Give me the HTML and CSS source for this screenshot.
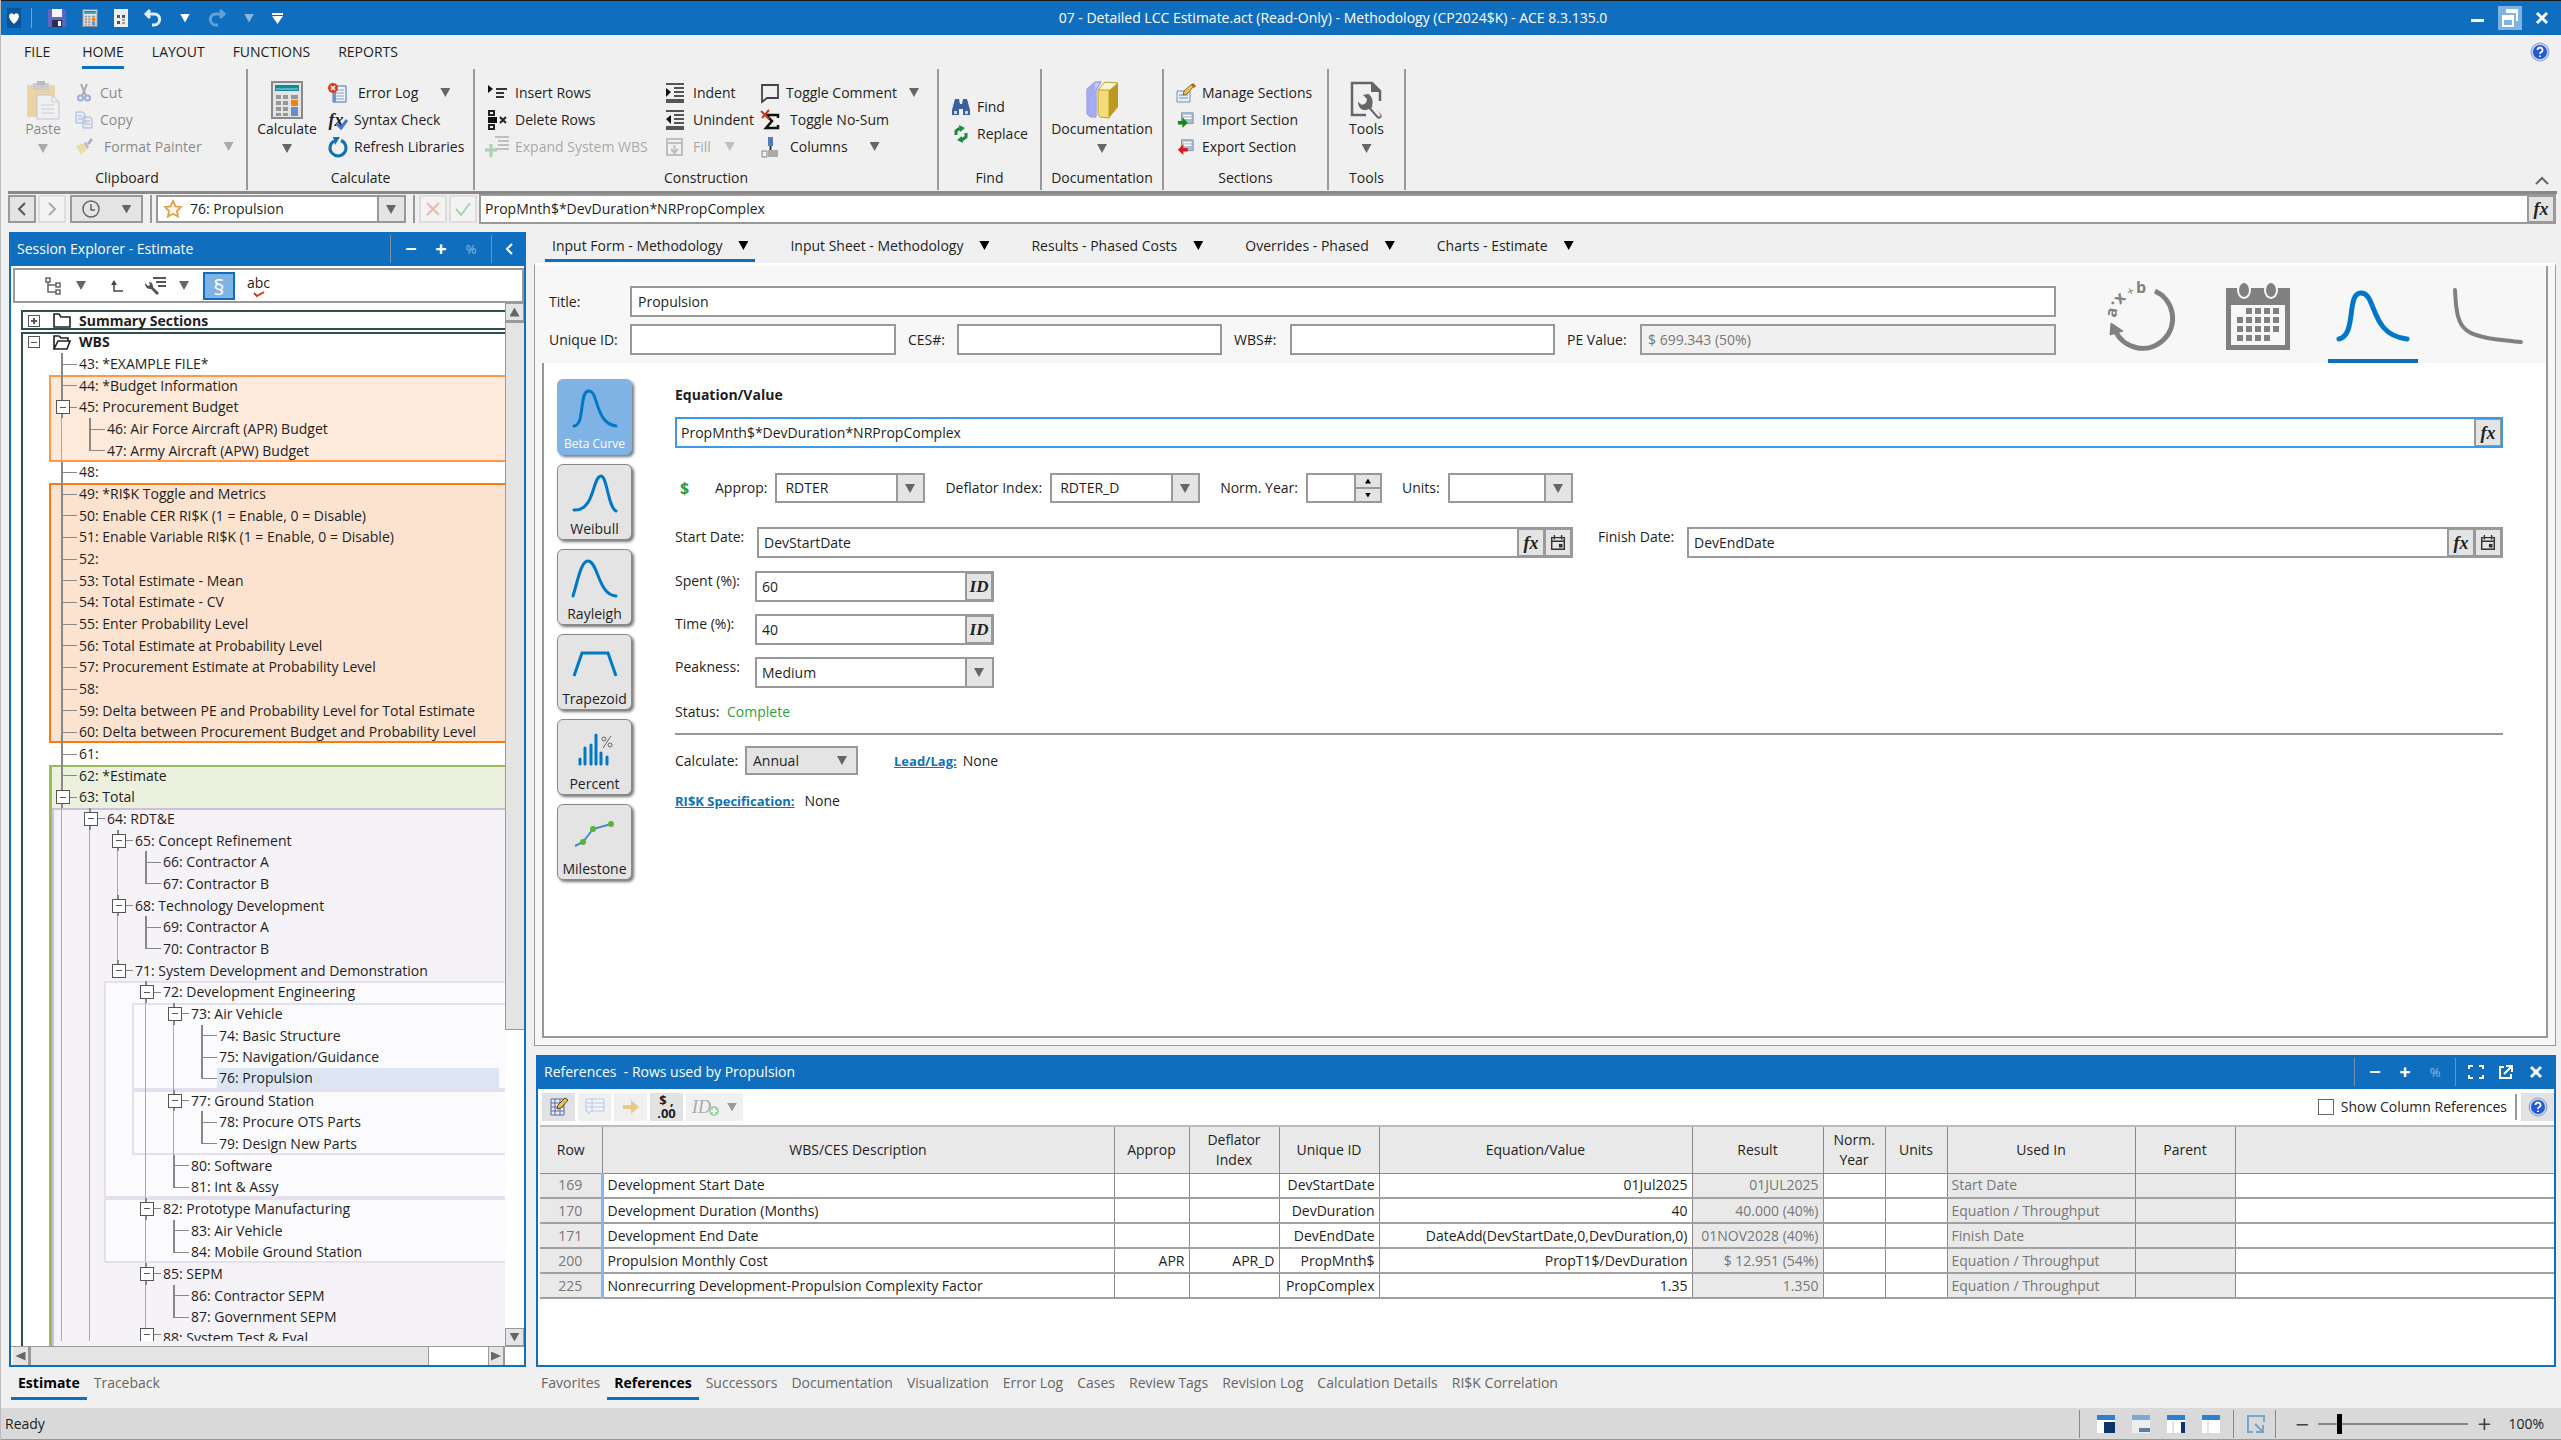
FILE: index.html
```html
<!DOCTYPE html>
<html lang="en">
<head>
<meta charset="utf-8">
<title>07 - Detailed LCC Estimate.act - ACE</title>
<link rel="stylesheet" href="styles.css">
</head>
<body>
<svg class="defs" aria-hidden="true">
  <symbol id="calc" viewBox="0 0 32 38"><rect x="1" y="1" width="30" height="36" fill="#e3e3e3" stroke="#8a8a8a" stroke-width="2"/><rect x="4" y="4" width="24" height="6" fill="#1b8498"/><rect x="5" y="7" width="22" height="2" fill="#52b6c6"/><g fill="#979797"><path d="M5 14h5v4H5zM12 14h5v4h-5zM5 20h5v4H5zM12 20h5v4h-5zM5 26h5v4H5zM12 26h5v4h-5zM5 32h5v3H5zM12 32h5v3h-5zM20 14h7v4h-7z"/></g><rect x="20" y="19" width="7" height="6" fill="#f77f0d"/><rect x="20" y="26" width="7" height="9" fill="#6b8cc4"/></symbol>
  <symbol id="help" viewBox="0 0 20 20"><circle cx="10" cy="10" r="9" fill="#c3d0e8" stroke="#8fa3cc"/><circle cx="10" cy="10" r="7" fill="#2358d6"/><path d="M7.500 8a2.500 2.500 0 1 1 3.500 2.300c-.8.400-1 .8-1 1.700M10 13.500v1.500" fill="none" stroke="#fff" stroke-width="1.800"/></symbol>
  <symbol id="beta" viewBox="0 0 48 42"><path d="M3 38C14 37 8 5 17 3c11-2 6 32 28 35" fill="none" stroke="#0078c8" stroke-width="3" stroke-linecap="round"/></symbol>
  <symbol id="cal" viewBox="0 0 20 20"><path d="M3 4h14v13H3zM3 8h14M6 1v5M14 1v5" fill="none" stroke="#333" stroke-width="1.600"/><rect x="11" y="11" width="4" height="4" fill="#333"/></symbol>
  <symbol id="pencilpad" viewBox="0 0 20 20"><path d="M1 8h13v11H1z" fill="#e8eef8" stroke="#7890b0"/><path d="M3 12h9M3 15h9" stroke="#7890b0"/><path d="M7 12l1-4 8-7 2 2-7 8z" fill="#e8c35a" stroke="#8a6a30"/><path d="M15 2l2-2 3 3-2 2z" fill="#c4532c"/></symbol>
  <symbol id="section" viewBox="0 0 20 20"><path d="M5 2h13v12H5z" fill="#a9bcd3" stroke="#8095b0"/><path d="M7 5h9M7 8h9" stroke="#fff" stroke-width="1.500"/><path d="M1 11h5V7l6 6-6 6v-4H1z" fill="currentColor"/></symbol>
  <symbol id="lines" viewBox="0 0 20 20"><path d="M1 1h18M9 5h10M9 9h10M9 13h10M1 17h18M1 19h18" stroke="#222" stroke-width="1.500"/></symbol>
</svg>

<header class="titlebar">
  <div class="quick">
    <button class="heart" aria-label="App"><svg width="10" height="11" viewBox="0 0 10 11"><path d="M5 11C2 8 0 6 0 3c0-3 4-4 5-1 1-3 5-2 5 1 0 3-2 5-5 8z" fill="#fff"/></svg></button><i class="qsep"></i>
    <button aria-label="Save"><svg width="18" height="18" viewBox="0 0 18 18"><path d="M0 0h16l2 2v16H0z" fill="#6065c0"/><path d="M4 0h10v8H4z" fill="#f4f4fc"/><path d="M4 11h10v7H4z" fill="#2a2c58"/><path d="M10 12h3v5h-3z" fill="#fff"/></svg></button>
    <button aria-label="Calculate"><svg width="16" height="18"><use href="#calc"/></svg></button>
    <button aria-label="Report"><svg width="14" height="18" viewBox="0 0 14 18"><path d="M0 0h14v18H0z" fill="#eee"/><path d="M3 6h3v3H3zM8 6h3v3H8zM3 12h3v3H3z" fill="#555"/><path d="M8 11h3M8 14h3" stroke="#555"/></svg></button>
    <button aria-label="Undo"><svg width="18" height="18" viewBox="0 0 18 18"><path d="M6 1L2 5l4 4M2 5h8c8 0 7 11 0 11H8" fill="none" stroke="#e4eefa" stroke-width="3"/></svg></button>
    <i class="caret white"></i>
    <button class="off" aria-label="Redo"><svg width="18" height="18" viewBox="0 0 18 18"><path d="M12 1l4 4-4 4M16 5H8C0 5 1 16 8 16h2" fill="none" stroke="#b8d4f0" stroke-width="3"/></svg></button>
    <i class="caret white off"></i>
    <button aria-label="Customize"><svg width="11" height="11" viewBox="0 0 11 11"><path d="M0 0h11v2H0zM0 3h11l-5.500 8z" fill="#fff"/></svg></button>
  </div>
  <h1>07 - Detailed LCC Estimate.act (Read-Only) - Methodology (CP2024$K) - ACE 8.3.135.0</h1>
  <div class="winbtns">
    <button aria-label="Minimize"><svg width="14" height="14"><path d="M0 8h13v3H0z" fill="#fff"/></svg></button>
    <button class="restore" aria-label="Restore"><svg width="24" height="24" viewBox="0 0 24 24"><path d="M8 3h12v12h-2V7H8zM4 9h12v12H4zM6 14v5h8v-5z" fill="#fff" fill-rule="evenodd"/></svg></button>
    <button aria-label="Close"><svg width="14" height="14" viewBox="0 0 14 14"><path d="M2 2l10 10M12 2L2 12" stroke="#fff" stroke-width="3"/></svg></button>
  </div>
</header>

<nav class="menu">
  <a href="#">FILE</a><a href="#" class="on">HOME</a><a href="#">LAYOUT</a><a href="#">FUNCTIONS</a><a href="#">REPORTS</a>
  <button class="helpbtn" aria-label="Help"><svg width="20" height="20"><use href="#help"/></svg></button>
</nav>

<section class="ribbon">
  <div class="grp g-clip"><div class="gbody">
    <button class="big dim"><svg width="34" height="38" viewBox="0 0 34 38"><path d="M1 4h28v32H1z" fill="#e8b861"/><path d="M7 2h16v7H7z" fill="#aaa"/><path d="M11 0h8v4h-8z" fill="#888"/><path d="M11 14h15l7 7v17H11z" fill="#eef0f5" stroke="#99a"/><path d="M26 14v7h7M15 24h13M15 28h13M15 32h13" fill="none" stroke="#aab"/></svg>Paste<i class="caret"></i></button>
    <div class="col">
      <button class="dim"><span class="ic"><svg width="14" height="18" viewBox="0 0 14 18"><path d="M4 0l5 12M10 0L5 12" stroke="#667" stroke-width="2"/><circle cx="3.500" cy="14" r="2.500" fill="none" stroke="#4a6fb8" stroke-width="2"/><circle cx="10.500" cy="14" r="2.500" fill="none" stroke="#4a6fb8" stroke-width="2"/></svg></span>Cut</button>
      <button class="dim"><span class="ic"><svg width="18" height="18" viewBox="0 0 18 18"><path d="M1 1h7l2 2v9H1zM8 6h7l2 2v9H8z" fill="#dce6f6" stroke="#5b7fc0"/><path d="M3 5h4M3 8h4M10 10h5M10 13h5" stroke="#5b7fc0"/></svg></span>Copy</button>
      <button class="dim wide"><span class="ic"><svg width="18" height="18" viewBox="0 0 18 18"><path d="M1 8l8-3 3 6-6 6z" fill="#e6c95c"/><path d="M9 5l3 6 2-2-3-5z" fill="#888"/><path d="M12 5l4-5 2 2-4 5z" fill="#6670b0"/></svg></span>Format Painter<i class="caret"></i></button>
    </div></div><h2>Clipboard</h2></div>
  <div class="grp g-calc"><div class="gbody">
    <button class="big"><svg width="32" height="38"><use href="#calc"/></svg>Calculate<i class="caret"></i></button>
    <div class="col">
      <button class="wide"><span class="ic"><svg width="20" height="20" viewBox="0 0 20 20"><path d="M5 3h13v16H5z" fill="#f2f6fc" stroke="#456ba5"/><path d="M8 7h8M8 10h8M8 13h8M8 16h8" stroke="#7ba0d4"/><path d="M5 3h3v16H5z" fill="#6f96cc"/><circle cx="5" cy="5" r="5" fill="#d8401e"/><path d="M3 3l4 4M7 3L3 7" stroke="#fff" stroke-width="1.500"/></svg></span>Error Log<i class="caret"></i></button>
      <button><span class="ic"><span class="fx">fx</span><svg class="tick" width="12" height="10" viewBox="0 0 12 10"><path d="M1 5l4 4 6-8" fill="none" stroke="#4b74d0" stroke-width="3"/></svg></span>Syntax Check</button>
      <button><span class="ic"><svg width="20" height="20" viewBox="0 0 20 20"><path d="M13 3.500A8 8 0 1 1 6 4" fill="none" stroke="#1170ae" stroke-width="3"/><path d="M5 0h7l-5 8z" fill="#1170ae"/></svg></span>Refresh Libraries</button>
    </div></div><h2>Calculate</h2></div>
  <div class="grp g-cons"><div class="gbody">
    <div class="col c1">
      <button><span class="ic"><svg width="20" height="16" viewBox="0 0 20 16"><path d="M1 0l5 4-5 4z" fill="#111"/><path d="M9 4h11M9 8h8M9 12h8" stroke="#333" stroke-width="2"/></svg></span>Insert Rows</button>
      <button><span class="ic"><svg width="20" height="20" viewBox="0 0 20 20"><path d="M2 1h5v4H2zM2 15h5v4H2z" fill="none" stroke="#222" stroke-width="2"/><path d="M1 7h9v6H1z" fill="#111"/><path d="M13 7l6 6M19 7l-6 6" stroke="#222" stroke-width="2"/></svg></span>Delete Rows</button>
      <button class="faint"><span class="ic"><svg width="24" height="22" viewBox="0 0 24 22"><path d="M10 1h14M13 5h11M13 9h11M10 13h14" stroke="#666" stroke-width="2"/><path d="M6 8v13M0 14h12" stroke="#2f9a3c" stroke-width="3"/></svg></span>Expand System WBS</button>
    </div>
    <div class="col c2">
      <button><span class="ic"><svg width="20" height="20"><use href="#lines"/><path d="M1 5l5 4-5 5z" fill="#111"/></svg></span>Indent</button>
      <button><span class="ic"><svg width="20" height="20"><use href="#lines"/><path d="M6 5L1 9l5 5z" fill="#111"/></svg></span>Unindent</button>
      <button class="faint"><span class="ic"><svg width="18" height="18" viewBox="0 0 18 18"><path d="M1 1h15v16H1zM1 5h15M8.500 7v8M5 11l3.500 4 3.500-4" fill="none" stroke="#666" stroke-width="2"/></svg></span>Fill<i class="caret"></i></button>
    </div>
    <div class="col c3">
      <button><span class="ic"><svg width="20" height="20" viewBox="0 0 20 20"><path d="M2 2h16v13H7l-5 4z" fill="none" stroke="#444" stroke-width="1.800"/></svg></span>Toggle Comment<i class="caret"></i></button>
      <button class="wide"><span class="ic"><svg width="20" height="20" viewBox="0 0 20 20"><path d="M18 8V5H6l6 6-6 7h12v-3" fill="none" stroke="#111" stroke-width="2.500"/><path d="M1 1l8 8M9 0L2 8" stroke="#d03a18" stroke-width="2"/></svg></span>Toggle No-Sum</button>
      <button class="wide"><span class="ic"><svg width="18" height="20" viewBox="0 0 18 20"><path d="M7 0h5v9H7z" fill="#5577c0"/><path d="M9.500 9v4" stroke="#333" stroke-width="2"/><path d="M1 14h5v6H1z" fill="none" stroke="#888"/><path d="M7 13h10v7H7z" fill="#aaa"/></svg></span>Columns<i class="caret"></i></button>
    </div></div><h2>Construction</h2></div>
  <div class="grp g-find"><div class="gbody"><div class="col">
      <button><span class="ic"><svg width="20" height="18" viewBox="0 0 20 18"><path d="M4 1h4l1 5h2l1-5h4l3 11v5h-7v-6H8v6H1v-5z" fill="#3d5f9e"/><path d="M3 13h3v3H3zM14 13h3v3h-3z" fill="#c5d6f2"/></svg></span>Find</button>
      <button><span class="ic"><svg width="16" height="18" viewBox="0 0 16 18"><path d="M3 10V6l4-3M13 8v4l-4 3" fill="none" stroke="#1c8a3a" stroke-width="3"/><path d="M6 0l6 3-5 4zM10 18l-6-3 5-4z" fill="#1c8a3a"/></svg></span>Replace</button>
  </div></div><h2>Find</h2></div>
  <div class="grp g-doc"><div class="gbody">
    <button class="big"><svg width="34" height="38" viewBox="0 0 34 38"><path d="M2 8l8-7h6l-5 8v27H5l-3-3z" fill="#c9cffa" stroke="#7b82d8"/><path d="M2 8l8-7v28l1 7H5l-3-3z" fill="#a4abf0"/><path d="M13 9l7-8 13 1-9 8z" fill="#fbf4d0" stroke="#b89a30"/><path d="M13 9h11v28l-9-1-2-3z" fill="#f4dd78" stroke="#c2a12b"/><path d="M24 10l9-8v24l-9 11z" fill="#bd9921"/></svg>Documentation<i class="caret"></i></button>
  </div><h2>Documentation</h2></div>
  <div class="grp g-sec"><div class="gbody"><div class="col">
      <button><span class="ic"><svg width="20" height="20"><use href="#pencilpad"/></svg></span>Manage Sections</button>
      <button><span class="ic green"><svg width="18" height="18"><use href="#section"/></svg></span>Import Section</button>
      <button><span class="ic red"><svg width="18" height="18" viewBox="0 0 20 20"><path d="M5 2h13v12H5z" fill="#a9bcd3" stroke="#8095b0"/><path d="M7 5h9M7 8h9" stroke="#fff" stroke-width="1.500"/><path d="M12 11H7V7l-6 6 6 6v-4h5z" fill="currentColor"/></svg></span>Export Section</button>
  </div></div><h2>Sections</h2></div>
  <div class="grp g-tool"><div class="gbody">
    <button class="big"><svg width="34" height="38" viewBox="0 0 34 38"><path d="M16 34H2V2h20l8 8v10" fill="none" stroke="#666" stroke-width="2.500"/><path d="M21 2v9h9z" fill="#666"/><path d="M18 13l-5 1 4 4-1 4-4 2-4-3c0 7 6 10 11 7l8 9c3 2 6-1 4-4l-9-8c2-6-1-11-4-12z" fill="#666"/><path d="M23 27l6 7" stroke="#f0f0f0" stroke-width="3" stroke-linecap="round"/></svg>Tools<i class="caret"></i></button>
  </div><h2>Tools</h2></div>
  <button class="collapse" aria-label="Collapse ribbon"><svg width="14" height="9" viewBox="0 0 14 9"><path d="M1 8l6-6 6 6" fill="none" stroke="#666" stroke-width="2"/></svg></button>
</section>

<section class="address">
  <button class="nav" aria-label="Back"><svg width="10" height="14" viewBox="0 0 10 14"><path d="M8 1L2 7l6 6" fill="none" stroke="#555" stroke-width="2"/></svg></button>
  <button class="nav ghost" aria-label="Forward"><svg width="10" height="14" viewBox="0 0 10 14"><path d="M2 1l6 6-6 6" fill="none" stroke="#aaa" stroke-width="2"/></svg></button>
  <button class="nav clock" aria-label="History"><svg width="18" height="18" viewBox="0 0 18 18"><circle cx="9" cy="9" r="8" fill="none" stroke="#666" stroke-width="1.500"/><path d="M9 4v6h4" fill="none" stroke="#666" stroke-width="1.500"/></svg><i class="caret"></i></button>
  <i class="asep"></i>
  <div class="star"><svg width="20" height="20" viewBox="0 0 20 20"><path d="M10 2l2.500 5.300 5.500.700-4 4 1 5.500-5-2.800L5 17.500 6 12 2 8l5.500-.7z" fill="#fff8ea" stroke="#e0a048" stroke-width="1.800"/></svg>
    <select aria-label="Row"><option>76: Propulsion</option></select></div>
  <i class="asep"></i>
  <button class="nav ghost" aria-label="Cancel"><svg width="14" height="14" viewBox="0 0 14 14"><path d="M1 1l12 12M13 1L1 13" stroke="#eab8ac" stroke-width="2"/></svg></button>
  <button class="nav ghost" aria-label="Accept"><svg width="16" height="14" viewBox="0 0 16 14"><path d="M1 7l5 6L15 1" fill="none" stroke="#a5d6a5" stroke-width="2"/></svg></button>
  <div class="field formula"><input aria-label="Formula" value="PropMnth$*DevDuration*NRPropComplex"><button class="fx">fx</button></div>
</section>

<main class="work">
  <aside class="left">
    <section class="explorer">
      <header class="phead"><h2>Session Explorer - Estimate</h2>
        <i class="psep"></i><button>−</button><button>+</button><button class="off pct">%</button><i class="psep"></i>
        <button aria-label="Collapse"><svg width="8" height="12" viewBox="0 0 8 12"><path d="M7 1L2 6l5 5" fill="none" stroke="#fff" stroke-width="2"/></svg></button></header>
      <div class="etools">
        <button aria-label="Tree"><svg width="16" height="18" viewBox="0 0 16 18"><path d="M1 1h4v4H1zM11 6h4v4h-4zM11 13h4v4h-4zM3 5v10h8M3 8h8" fill="none" stroke="#666" stroke-width="1.500"/></svg></button><i class="caret"></i>
        <button aria-label="Up"><svg width="12" height="12" viewBox="0 0 12 12"><path d="M3 3v8h9" fill="none" stroke="#444" stroke-width="1.500"/><path d="M0 5l3-5 3 5z" fill="#444"/></svg></button>
        <button aria-label="Settings"><svg width="22" height="20" viewBox="0 0 22 20"><path d="M8 2h13M11 6h10M13 10h8" stroke="#555" stroke-width="2"/><path d="M0 7c0 5 3 6 6 6l6 6 2-2-6-6c0-4-2-5-4-5l1 3-2 1z" fill="#555"/></svg></button><i class="caret near"></i>
        <button class="para">§</button>
        <button class="abc">abc<svg width="12" height="6" viewBox="0 0 12 6"><path d="M1 2l3 3 7-4" fill="none" stroke="#c8401e" stroke-width="2"/></svg></button>
      </div>
      <div class="ebody">
        <div class="tree">
          <div class="layer">
            <div class="bx dark b1"></div><div class="bx dark b2"></div><div class="bx or1"></div><div class="bx or2"></div><div class="bx gr"></div><div class="bx pu"></div><div class="bx lt p72"></div><div class="bx lt p73"></div><div class="bx lt p77"></div><div class="bx lt p82"></div>
          </div>
          <div class="layer">
          <div class="r top"><b class="pm plus"></b><svg width="18" height="15" viewBox="0 0 18 15"><path d="M1 14V1h5l2 3h9v10z" fill="#fff" stroke="#222" stroke-width="1.600"/></svg>Summary Sections</div>
          <div class="r top"><b class="pm"></b><svg width="18" height="15" viewBox="0 0 18 15"><path d="M1 14V1h5l2 2h7v3M1 14l4-8h12l-3 8z" fill="#fff" stroke="#222" stroke-width="1.600"/></svg>WBS</div>
          <div class="r"><i class="t"></i>43: *EXAMPLE FILE*</div>
          <div class="r"><i class="t"></i>44: *Budget Information</div>
          <div class="r"><i class="m"></i>45: Procurement Budget</div>
          <div class="r"><i class="v"></i><i class="t"></i>46: Air Force Aircraft (APR) Budget</div>
          <div class="r"><i class="v"></i><i class="e"></i>47: Army Aircraft (APW) Budget</div>
          <div class="r"><i class="t"></i>48:</div>
          <div class="r"><i class="t"></i>49: *RI$K Toggle and Metrics</div>
          <div class="r"><i class="t"></i>50: Enable CER RI$K (1 = Enable, 0 = Disable)</div>
          <div class="r"><i class="t"></i>51: Enable Variable RI$K (1 = Enable, 0 = Disable)</div>
          <div class="r"><i class="t"></i>52:</div>
          <div class="r"><i class="t"></i>53: Total Estimate - Mean</div>
          <div class="r"><i class="t"></i>54: Total Estimate - CV</div>
          <div class="r"><i class="t"></i>55: Enter Probability Level</div>
          <div class="r"><i class="t"></i>56: Total Estimate at Probability Level</div>
          <div class="r"><i class="t"></i>57: Procurement Estimate at Probability Level</div>
          <div class="r"><i class="t"></i>58:</div>
          <div class="r"><i class="t"></i>59: Delta between PE and Probability Level for Total Estimate</div>
          <div class="r"><i class="t"></i>60: Delta between Procurement Budget and Probability Level</div>
          <div class="r"><i class="t"></i>61:</div>
          <div class="r"><i class="t"></i>62: *Estimate</div>
          <div class="r"><i class="m"></i>63: Total</div>
          <div class="r"><i class="v"></i><i class="m"></i>64: RDT&amp;E</div>
          <div class="r"><i class="v"></i><i class="v"></i><i class="m"></i>65: Concept Refinement</div>
          <div class="r"><i class="v"></i><i class="v"></i><i class="v"></i><i class="t"></i>66: Contractor A</div>
          <div class="r"><i class="v"></i><i class="v"></i><i class="v"></i><i class="e"></i>67: Contractor B</div>
          <div class="r"><i class="v"></i><i class="v"></i><i class="m"></i>68: Technology Development</div>
          <div class="r"><i class="v"></i><i class="v"></i><i class="v"></i><i class="t"></i>69: Contractor A</div>
          <div class="r"><i class="v"></i><i class="v"></i><i class="v"></i><i class="e"></i>70: Contractor B</div>
          <div class="r"><i class="v"></i><i class="v"></i><i class="m z"></i>71: System Development and Demonstration</div>
          <div class="r"><i class="v"></i><i class="v"></i><i></i><i class="m"></i>72: Development Engineering</div>
          <div class="r"><i class="v"></i><i class="v"></i><i></i><i class="v"></i><i class="m"></i>73: Air Vehicle</div>
          <div class="r"><i class="v"></i><i class="v"></i><i></i><i class="v"></i><i class="v"></i><i class="t"></i>74: Basic Structure</div>
          <div class="r"><i class="v"></i><i class="v"></i><i></i><i class="v"></i><i class="v"></i><i class="t"></i>75: Navigation/Guidance</div>
          <div class="r"><i class="v"></i><i class="v"></i><i></i><i class="v"></i><i class="v"></i><i class="e"></i><span class="sel">76: Propulsion</span></div>
          <div class="r"><i class="v"></i><i class="v"></i><i></i><i class="v"></i><i class="m"></i>77: Ground Station</div>
          <div class="r"><i class="v"></i><i class="v"></i><i></i><i class="v"></i><i class="v"></i><i class="t"></i>78: Procure OTS Parts</div>
          <div class="r"><i class="v"></i><i class="v"></i><i></i><i class="v"></i><i class="v"></i><i class="e"></i>79: Design New Parts</div>
          <div class="r"><i class="v"></i><i class="v"></i><i></i><i class="v"></i><i class="t"></i>80: Software</div>
          <div class="r"><i class="v"></i><i class="v"></i><i></i><i class="v"></i><i class="e"></i>81: Int &amp; Assy</div>
          <div class="r"><i class="v"></i><i class="v"></i><i></i><i class="m"></i>82: Prototype Manufacturing</div>
          <div class="r"><i class="v"></i><i class="v"></i><i></i><i class="v"></i><i class="t"></i>83: Air Vehicle</div>
          <div class="r"><i class="v"></i><i class="v"></i><i></i><i class="v"></i><i class="e"></i>84: Mobile Ground Station</div>
          <div class="r"><i class="v"></i><i class="v"></i><i></i><i class="m"></i>85: SEPM</div>
          <div class="r"><i class="v"></i><i class="v"></i><i></i><i class="v"></i><i class="t"></i>86: Contractor SEPM</div>
          <div class="r"><i class="v"></i><i class="v"></i><i></i><i class="v"></i><i class="e"></i>87: Government SEPM</div>
          <div class="r cut"><i class="v"></i><i class="v"></i><i></i><i class="m"></i>88: System Test &amp; Eval</div>
          </div>
        </div>
        <div class="vbar"><button aria-label="Scroll up"><i class="caret up"></i></button><div class="thumb"></div><button aria-label="Scroll down"><i class="caret"></i></button></div>
      </div>
      <div class="hbar"><button aria-label="Scroll left"><i class="caret lf"></i></button><div class="thumb"></div><button aria-label="Scroll right"><i class="caret rt"></i></button><div class="corner"></div></div>
    </section>
    <nav class="btabs"><a href="#" class="on">Estimate</a><a href="#">Traceback</a></nav>
  </aside>

  <div class="right">
    <nav class="ftabs">
      <a href="#" class="on">Input Form - Methodology<i class="caret"></i></a><a href="#">Input Sheet - Methodology<i class="caret"></i></a><a href="#">Results - Phased Costs<i class="caret"></i></a><a href="#">Overrides - Phased<i class="caret"></i></a><a href="#">Charts - Estimate<i class="caret"></i></a>
    </nav>
    <section class="form">
      <div class="fhead">
        <div class="ident">
          <label for="ti">Title:</label><input id="ti" class="span" value="Propulsion">
          <label for="ui">Unique ID:</label><input id="ui">
          <label for="ces">CES#:</label><input id="ces">
          <label for="wbs">WBS#:</label><input id="wbs">
          <label for="pe">PE Value:</label><input id="pe" class="ro" value="$ 699.343 (50%)" readonly>
        </div>
        <div class="modes">
          <button aria-label="Equation"><svg width="72" height="74" viewBox="0 0 72 74"><path d="M48 12A30 30 0 1 1 8 51" fill="none" stroke="#808080" stroke-width="5"/><path d="M4 44l12 8-13 4z" fill="#808080" stroke="#808080"/><g fill="#808080" font-family="Open Sans, sans-serif" font-weight="700" font-size="16"><text transform="translate(9 39) rotate(-80)">a</text><text transform="translate(9 29) rotate(-55)">·</text><text transform="translate(13 26) rotate(-45)">x</text><text transform="translate(22 18) rotate(-25)" font-weight="400" font-size="13">+</text><text x="29" y="14">b</text></g></svg></button>
          <button aria-label="Calendar"><svg width="66" height="70" viewBox="0 0 66 70"><path d="M1 7h64v62H1zM6 24v40h54V24z" fill="#808080" fill-rule="evenodd"/><ellipse cx="19" cy="9" rx="6" ry="8" fill="#808080" stroke="#f7f7f7" stroke-width="2"/><ellipse cx="46" cy="9" rx="6" ry="8" fill="#808080" stroke="#f7f7f7" stroke-width="2"/><path d="M21 30h33" stroke="#808080" stroke-width="6" stroke-dasharray="6 3"/><path d="M12 39h42M12 48h42" stroke="#808080" stroke-width="6" stroke-dasharray="6 3"/><path d="M12 57h33" stroke="#808080" stroke-width="6" stroke-dasharray="6 3"/></svg></button>
          <button class="on" aria-label="Phasing"><svg width="74" height="54" viewBox="0 0 74 54"><path d="M3 50C21 46 10 4 25 4c16 0 8 42 46 46" fill="none" stroke="#0078c8" stroke-width="5" stroke-linecap="round"/></svg></button>
          <button aria-label="Learning"><svg width="72" height="58" viewBox="0 0 72 58"><path d="M3 3c2 45 8 46 66 52" fill="none" stroke="#808080" stroke-width="4" stroke-linecap="round"/></svg></button>
        </div>
      </div>
      <div class="fbody">
        <div class="curves">
          <button class="on"><svg width="48" height="42"><use href="#beta"/></svg>Beta Curve</button>
          <button><svg width="48" height="42" viewBox="0 0 48 42"><path d="M3 37C24 38 21 4 30 3c6 0 7 31 15 35" fill="none" stroke="#0078c8" stroke-width="3" stroke-linecap="round"/></svg>Weibull</button>
          <button><svg width="48" height="42" viewBox="0 0 48 42"><path d="M2 38C7 22 10 3 17 3c10 0 10 34 28 35" fill="none" stroke="#0078c8" stroke-width="3" stroke-linecap="round"/></svg>Rayleigh</button>
          <button><svg width="48" height="42" viewBox="0 0 48 42"><path d="M3 33L11 10h26l8 23" fill="none" stroke="#0078c8" stroke-width="3"/></svg>Trapezoid</button>
          <button><svg width="48" height="42" viewBox="0 0 48 42"><path d="M9 36v-5M14 36V20M20 36V17M25 36V7M30 36V25M36 36v-7" stroke="#0078c8" stroke-width="3" stroke-linecap="round"/><circle cx="33" cy="11" r="2" fill="none" stroke="#666"/><circle cx="39" cy="17" r="2" fill="none" stroke="#666"/><path d="M40 8l-8 12" stroke="#666"/></svg>Percent</button>
          <button><svg width="48" height="42" viewBox="0 0 48 42"><path d="M4 33l8-4 10-13 18-5" fill="none" stroke="#3b8cd2" stroke-width="2"/><g fill="#59b335"><circle cx="12" cy="29" r="3"/><circle cx="22" cy="16" r="3"/><circle cx="40" cy="11" r="3"/></g></svg>Milestone</button>
        </div>
        <div class="fields">
          <h3><label for="eq">Equation/Value</label></h3>
          <div class="field eq"><input id="eq" value="PropMnth$*DevDuration*NRPropComplex"><button class="fx">fx</button></div>
          <div class="line">
            <b class="dollar">$</b>
            <label for="ap">Approp:</label><select id="ap" class="w150"><option>RDTER</option></select>
            <label for="di">Deflator Index:</label><select id="di" class="w150"><option>RDTER_D</option></select>
            <label for="ny">Norm. Year:</label><span class="spin"><input id="ny"><span><button aria-label="Up"><i class="caret up"></i></button><button aria-label="Down"><i class="caret"></i></button></span></span>
            <label for="un">Units:</label><select id="un" class="w124"><option></option></select>
          </div>
          <div class="dates">
            <label for="sd">Start Date:</label><div class="field"><input id="sd" value="DevStartDate"><button class="fx">fx</button><button aria-label="Pick date"><svg width="18" height="18"><use href="#cal"/></svg></button></div>
            <label for="fd">Finish Date:</label><div class="field"><input id="fd" value="DevEndDate"><button class="fx">fx</button><button aria-label="Pick date"><svg width="18" height="18"><use href="#cal"/></svg></button></div>
          </div>
          <div class="stack">
            <label for="sp">Spent (%):</label><div class="field"><input id="sp" value="60"><button class="fx id">ID</button></div>
            <label for="tm">Time (%):</label><div class="field"><input id="tm" value="40"><button class="fx id">ID</button></div>
            <label for="pk">Peakness:</label><select id="pk" class="blk"><option>Medium</option></select>
          </div>
          <p class="status">Status: <span>Complete</span></p>
          <hr>
          <div class="calc"><label for="ca">Calculate:</label><select id="ca"><option>Annual</option></select><a href="#">Lead/Lag:</a><span>None</span></div>
          <div class="risk"><a href="#">RI$K Specification:</a><span>None</span></div>
        </div>
      </div>
    </section>

    <section class="refs">
      <header class="phead"><h2>References&nbsp; - Rows used by Propulsion</h2>
        <i class="psep"></i><button>−</button><button>+</button><button class="off pct">%</button><i class="psep"></i>
        <button aria-label="Maximize"><svg width="16" height="14" viewBox="0 0 16 14"><path d="M1 4V1h4M11 1h4v3M15 10v3h-4M5 13H1v-3" fill="none" stroke="#fff" stroke-width="2"/></svg></button>
        <button aria-label="Pop out"><svg width="14" height="14" viewBox="0 0 14 14"><path d="M5 2H1v11h11V9M5 9l7-7M7 1h6v6" fill="none" stroke="#fff" stroke-width="2"/></svg></button>
        <button aria-label="Close"><svg width="14" height="14" viewBox="0 0 14 14"><path d="M2 2l10 10M12 2L2 12" stroke="#fff" stroke-width="3"/></svg></button></header>
      <div class="rtools">
        <button class="act" aria-label="Edit"><svg width="20" height="20" viewBox="0 0 20 20"><path d="M2 2h13v16H2zM2 6h13M2 10h13M2 14h13M6 2v16M11 2v16" fill="#eef" stroke="#556a9c"/><path d="M8 12l1-4 7-7 3 2-7 8z" fill="#e8c35a" stroke="#5a4020"/></svg></button>
        <button aria-label="Sheet"><svg width="20" height="18" viewBox="0 0 20 18"><path d="M1 1h18v12H6l-3 3V13H1zM1 5h18M1 9h18M7 1v12" fill="#f2f6fc" stroke="#b6c8e4"/></svg></button>
        <button aria-label="Go to" class="go"><svg width="16" height="14" viewBox="0 0 16 14"><path d="M0 5h8V0l8 7-8 7V9H0z" fill="#e9c988"/></svg></button>
        <button class="act money"><span>$ ,</span><span>.00</span></button>
        <button class="idb"><span class="fx">ID</span><svg width="10" height="12" viewBox="0 0 10 12"><circle cx="5" cy="6" r="5" fill="#9ed7a0"/><path d="M5 3v6M2 6h6" stroke="#fff" stroke-width="2"/></svg><i class="caret"></i></button>
        <label class="chk"><input type="checkbox">Show Column References</label>
        <i class="tsep"></i>
        <button class="act" aria-label="Help"><svg width="20" height="20"><use href="#help"/></svg></button>
      </div>
      <table>
        <colgroup><col class="k62"><col class="k512"><col class="k75"><col class="k90"><col class="k100"><col class="k313"><col class="k131"><col class="k62"><col class="k62"><col class="k188"><col class="k100"><col></colgroup>
        <thead><tr><th>Row</th><th>WBS/CES Description</th><th>Approp</th><th>Deflator Index</th><th>Unique ID</th><th>Equation/Value</th><th>Result</th><th>Norm. Year</th><th>Units</th><th>Used In</th><th>Parent</th><th></th></tr></thead>
        <tbody>
          <tr><td>169</td><td>Development Start Date</td><td></td><td></td><td>DevStartDate</td><td>01Jul2025</td><td>01JUL2025</td><td></td><td></td><td>Start Date</td><td></td><td></td></tr>
          <tr><td>170</td><td>Development Duration (Months)</td><td></td><td></td><td>DevDuration</td><td>40</td><td>40.000 (40%)</td><td></td><td></td><td>Equation / Throughput</td><td></td><td></td></tr>
          <tr><td>171</td><td>Development End Date</td><td></td><td></td><td>DevEndDate</td><td>DateAdd(DevStartDate,0,DevDuration,0)</td><td>01NOV2028 (40%)</td><td></td><td></td><td>Finish Date</td><td></td><td></td></tr>
          <tr><td>200</td><td>Propulsion Monthly Cost</td><td>APR</td><td>APR_D</td><td>PropMnth$</td><td>PropT1$/DevDuration</td><td>$ 12.951 (54%)</td><td></td><td></td><td>Equation / Throughput</td><td></td><td></td></tr>
          <tr><td>225</td><td>Nonrecurring Development-Propulsion Complexity Factor</td><td></td><td></td><td>PropComplex</td><td>1.35</td><td>1.350</td><td></td><td></td><td>Equation / Throughput</td><td></td><td></td></tr>
        </tbody>
      </table>
    </section>
    <nav class="btabs"><a href="#">Favorites</a><a href="#" class="on">References</a><a href="#">Successors</a><a href="#">Documentation</a><a href="#">Visualization</a><a href="#">Error Log</a><a href="#">Cases</a><a href="#">Review Tags</a><a href="#">Revision Log</a><a href="#">Calculation Details</a><a href="#">RI$K Correlation</a></nav>
  </div>
</main>

<footer class="statusbar">
  <span class="ready">Ready</span>
  <i class="ssep"></i>
  <div class="views">
    <button aria-label="View 1"><svg width="20" height="18" viewBox="0 0 20 18"><path d="M1 0h18v18H1z" fill="#fff"/><path d="M1 0h18v5H1z" fill="#2b7fd4"/><path d="M8 7h11v11H8z" fill="#0b3564"/></svg></button>
    <button aria-label="View 2"><svg width="20" height="18" viewBox="0 0 20 18"><path d="M1 0h18v18H1z" fill="#eee"/><path d="M1 0h18v5H1z" fill="#7aa9da"/><path d="M8 13h11v4H8z" fill="#5f7f9f"/></svg></button>
    <button aria-label="View 3"><svg width="20" height="18" viewBox="0 0 20 18"><path d="M1 0h18v18H1z" fill="#fff"/><path d="M1 0h18v5H1z" fill="#2b7fd4"/><path d="M15 7h4v11h-4z" fill="#0b3564"/><path d="M7 6v12" stroke="#bcd"/></svg></button>
    <button aria-label="View 4"><svg width="20" height="18" viewBox="0 0 20 18"><path d="M1 0h18v18H1z" fill="#fff"/><path d="M1 0h18v5H1z" fill="#2b7fd4"/><path d="M7 6v12" stroke="#bcd"/></svg></button>
  </div>
  <i class="ssep"></i>
  <button class="fit" aria-label="Fit"><svg width="18" height="18" viewBox="0 0 18 18"><path d="M6 17H1V1h16v6M8 9l7 7M16 10v7H9" fill="none" stroke="#7aa4cc" stroke-width="2"/></svg></button>
  <i class="ssep"></i>
  <button class="zb">−</button><input type="range" aria-label="Zoom" min="0" max="100" value="13"><button class="zb">+</button><span class="zoom">100%</span>
</footer>
</body>
</html>
```

FILE: styles.css
```css
:root{--blue:#106ebe;--line:#999;--btn:#e4e4e4;--txt:#1e1e1e}
*{box-sizing:border-box}
html,body{height:100%}
body{margin:0;display:flex;flex-direction:column;background:#f0f0f0;color:var(--txt);font:14px/20px "Open Sans","Noto Sans",sans-serif;overflow:hidden;border-left:1px solid #bbb}
.defs{position:absolute;width:0;height:0}
button,input,select{font:inherit;color:inherit;margin:0;padding:0;border:0;background:none;border-radius:0}
button{display:inline-flex;align-items:center;justify-content:center;white-space:nowrap}
h1,h2,h3,p{margin:0;font-size:14px;font-weight:400}
a{color:inherit;text-decoration:none;white-space:nowrap}
svg{flex:none;display:block;overflow:visible}
.caret{flex:none;width:10px;height:9px;background:#666;clip-path:polygon(0 0,100% 0,50% 100%)}
.caret.white{background:#fff}
.caret.up{clip-path:polygon(50% 0,100% 100%,0 100%)}
.caret.lf{clip-path:polygon(0 50%,100% 0,100% 100%)}
.caret.rt{clip-path:polygon(0 0,100% 50%,0 100%)}
.off{opacity:.5}
.fx{font-family:"Liberation Serif",serif;font-style:italic;font-weight:700;font-size:18px;color:#222}

/* title bar */
.titlebar{flex:none;display:grid;grid-template-columns:1fr auto 1fr;align-items:center;height:35px;background:var(--blue);border-top:1px solid #1a1a1a;color:#fff}
.titlebar h1{padding-left:104px}
.quick{display:flex;align-items:center;gap:16px;padding-left:6px}
.heart{width:14px;height:20px;background:#0a559c}
.qsep{width:1px;height:20px;background:#7a9fc4;margin-left:-6px}
.quick .caret{margin:0 2px}
.winbtns{display:flex;justify-content:flex-end;align-items:center;gap:13px;padding-right:12px}
.restore{background:#7fb2e5}

/* menu */
.menu{flex:none;display:flex;align-items:center;height:34px;padding:0 11px 0 23px;gap:28px}
.menu a{height:34px;line-height:34px;border-bottom:3px solid transparent}
.menu a:first-child{margin-right:4px}
.menu a.on{border-color:var(--blue)}
.helpbtn{margin-left:auto}

/* ribbon */
.ribbon{flex:none;display:flex;height:125px;margin:0 4px 0 7px;border-bottom:3px solid #888}
.grp{display:flex;flex-direction:column;height:121px;border-right:2px solid var(--line)}
.grp h2{text-align:center;line-height:24px}
.gbody{display:flex;height:97px;padding-top:10px}
.g-clip{width:240px}.g-calc{width:227px}.g-cons{width:464px}.g-find{width:103px}.g-doc{width:122px}.g-sec{width:165px}.g-tool{width:77px}
.col{display:flex;flex-direction:column;align-items:flex-start}
.col button{height:27px;gap:6px}
.col .wide{gap:10px}
.col .caret{margin-left:6px}
.col .wide .caret{margin-left:12px}
.ic{width:20px;display:flex;align-items:center;justify-content:center}
.tick{margin:8px 0 0 -8px}
.big{flex-direction:column;justify-content:flex-start;padding-top:2px;width:100%}
.big .caret{margin-top:5px}
.dim{opacity:.5}.faint{opacity:.35}
.g-clip .gbody{padding-left:8px}.g-clip .big{width:54px}.g-clip .col{margin-left:4px}
.g-calc .big{width:78px}.g-calc .col{margin-left:2px}
.g-cons .gbody{padding-left:12px}
.c1{width:178px}.c2{width:95px}.c1 button,.c2 button{gap:8px}
.g-find .gbody,.g-sec .gbody{padding-left:12px}
.g-find .gbody{padding-top:24px}
.green{color:#128a12}.red{color:#e01818}
.collapse{margin:auto 8px 6px auto}

/* address bar */
.address{flex:none;display:flex;align-items:center;gap:2px;height:30px;padding:0 5px 0 7px}
.nav{width:28px;height:28px;background:var(--btn);border:2px solid var(--line)}
.nav.ghost{background:#f3f3f3;border-color:#ddd}
.nav.clock{width:73px;gap:22px;margin-left:2px}
.asep{width:2px;height:28px;background:var(--line);margin:0 2px 0 5px}
.star{display:flex;align-items:center;width:250px;height:28px;border:2px solid var(--line);background:#fff;padding-left:5px}
.field{display:flex;border:2px solid var(--line);background:#fff;height:31px}
.field input{flex:1;min-width:0;padding:0 5px}
.field button{width:27px;background:var(--btn);border:2px solid var(--line);border-width:1px 1px 1px 2px}
.formula{flex:1;height:30px}
.formula input{padding:0 4px}

select{appearance:none;height:30px;border:2px solid var(--line);padding:0 30px 0 9px;background:url("data:image/svg+xml,%3Csvg xmlns='http://www.w3.org/2000/svg' width='10' height='9'%3E%3Cpath d='M0 0h10l-5 9z' fill='%23666'/%3E%3C/svg%3E") right 8px center no-repeat,linear-gradient(#999,#999) right 25px center/2px 100% no-repeat,linear-gradient(#e4e4e4,#e4e4e4) right center/25px 100% no-repeat #fff}
.star select{flex:1;height:24px;border:0;padding-left:7px}
.w150{width:150px}.w124{width:125px}

/* panels */
.work{flex:1;display:flex;min-height:0;padding:8px 5px 0 8px;gap:8px}
.left{flex:none;width:517px;display:flex;flex-direction:column}
.phead{flex:none;display:flex;align-items:center;height:34px;padding:0 5px 0 8px;background:var(--blue);color:#fff}
.phead h2{flex:1}
.phead button{width:30px;font-size:20px;font-weight:700}
.phead .pct{font-size:13px;font-weight:400}
.psep{width:1px;height:28px;background:#7a8fa8;margin:0 5px}
.explorer{flex:1;min-height:0;display:flex;flex-direction:column;background:#fff;border:2px solid var(--blue);border-top:0}
.explorer .phead{margin:0 -2px}
.explorer .phead>button:last-child{width:24px}
.etools{flex:none;display:flex;align-items:center;height:35px;margin:2px 0 0 2px;padding-left:30px;border:2px solid var(--line)}
.etools .caret{margin:0 25px 0 15px}
.etools .caret+button{margin-right:22px}
.etools .near{margin:0 14px 0 -10px}
.etools .near+.para{margin-right:12px}
.para{width:32px;height:28px;background:#7fb2e5;border:2px solid var(--blue);color:#fff;font-size:22px}
.etools button:nth-of-type(3){margin-right:22px}
.abc{flex-direction:column;line-height:16px}
.ebody{flex:1;min-height:0;display:flex}
.tree{flex:1;min-width:0;display:grid;grid-template:minmax(0,1fr)/minmax(0,1fr);overflow:hidden;padding:7px 0 0 2px}
.layer{grid-area:1/1;min-height:0;display:grid;grid-template-columns:minmax(0,1fr);grid-template-rows:repeat(47,minmax(0,1fr)) 13px 5px}
.r{min-height:0;display:flex;align-items:center;white-space:nowrap;padding-left:48px}
.r>i{flex:none;width:28px;align-self:stretch;display:flex;align-items:center}
.r>i:last-of-type{width:18px}
.v{background:linear-gradient(#aaa,#aaa) 0 0/1px 100% no-repeat}
.t{background:linear-gradient(#888,#888) 0 0/2px 100% no-repeat,linear-gradient(#888,#888) 0 50%/16px 1px no-repeat}
.e{background:linear-gradient(#888,#888) 0 0/2px 50% no-repeat,linear-gradient(#888,#888) 0 50%/16px 1px no-repeat}
.m{background:linear-gradient(#888,#888) 0 0/2px 100% no-repeat,linear-gradient(#888,#888) 0 50%/16px 1px no-repeat}
.m.z{background-size:2px 50%,16px 1px}
.m::before,.pm{content:"";width:12px;height:12px;margin-left:-5px;border:1px solid #555;background:linear-gradient(#555,#555) center/6px 1px no-repeat #fff}
.top{font-weight:700;padding-left:15px}
.pm{margin:0 13px 0 0}
.pm.plus{background:linear-gradient(#555,#555) center/6px 2px no-repeat,linear-gradient(#555,#555) center/2px 6px no-repeat #fff}
.top svg{margin-right:8px}
.sel{align-self:stretch;flex:1;margin:0 6px 0 -2px;padding-left:2px;background:#dce6f2}
.cut{overflow:hidden;align-items:flex-start;line-height:20px}
.bx{grid-column:1;border:2px solid;border-right:0}
.dark{margin-left:8px;border-color:#2f4f4f}
.b1{grid-row:1;margin-bottom:2px}.b2{grid-row:2/50;border-bottom:0}
.or1{grid-row:4/8;margin-left:36px;background:#fdeada;border-color:#ff9848}
.or2{grid-row:9/21;margin-left:36px;background:#fce3cf;border-color:#fb7a12}
.gr{grid-row:22/50;margin-left:36px;background:#ebf1de;border-color:#9bbb59;border-left-width:3px;border-bottom:0}
.pu{grid-row:24/50;margin-left:39px;background:#f5f2f8;border-color:#ccc0da;border-bottom:0}
.lt{background:#fbfafd;border-color:#e6e0ee}
.p72{grid-row:32/42;margin-left:91px}.p73{grid-row:33/37;margin-left:119px}.p77{grid-row:37/40;margin-left:119px}.p82{grid-row:42/45;margin-left:91px}
.vbar{width:19px;display:flex;flex-direction:column}
.vbar button{flex:none;height:18px;background:var(--btn);border:1px solid var(--line)}
.vbar button:last-child{margin-top:auto}
.vbar .thumb{height:68%;background:var(--btn);border:solid var(--line);border-width:2px 0 1px 1px}
.hbar{flex:none;display:flex;height:19px;padding-left:2px;border-top:1px solid var(--line)}
.hbar button{width:17px;border-right:2px solid var(--line);background:var(--btn)}
.hbar .thumb{width:399px;background:var(--btn);border:solid var(--line);border-width:0 1px}
.hbar .thumb+button{margin-left:auto;border-left:1px solid var(--line)}
.corner{width:19px}
.btabs{flex:none;display:flex;height:41px;color:#666}
.btabs a{height:33px;line-height:31px;padding:0 7px;border-bottom:3px solid transparent}
.left .btabs{padding-left:2px}
.btabs .on{font-weight:700;color:#000;border-color:var(--blue)}

/* form */
.right{flex:1;min-width:0;display:flex;flex-direction:column}
.ftabs{flex:none;display:flex;height:31px;padding-left:11px;gap:28px}
.ftabs a{display:flex;align-items:center;gap:16px;height:30px;padding:0 7px;border-bottom:3px solid transparent}
.ftabs .on{border-color:var(--blue)}
.ftabs .caret{background:#000}
.form{flex:1;min-height:0;display:flex;flex-direction:column;background:#f7f7f7;border:1px solid var(--line);border-top:3px solid #fff;padding:0 7px 7px}
.fhead{flex:none;display:flex;height:97px}
.ident{flex:1;display:grid;grid-template-columns:81px 266fr 61px 265fr 68px 265fr 85px 416fr;grid-auto-rows:31px;row-gap:7px;padding:20px 0 0 7px;align-items:center}
.ident input{height:31px;min-width:0;border:2px solid var(--line);background:#fff;padding:0 6px}
.ident .span{grid-column:2/-1}
.ident label~label{padding-left:12px}
.ident label[for=ui]{padding-left:0}
.ident .ro{background:#f0f0f0;color:#777}
.modes{flex:none;display:flex;width:492px;padding-left:42px;gap:25px;border-right:2px solid var(--line)}
.modes button{width:90px;padding-top:7px;border-bottom:4px solid transparent}
.modes .on{border-color:var(--blue)}
.fbody{flex:1;min-height:0;display:flex;background:#fff;border:2px solid var(--line);border-top:0}
.curves{flex:none;width:131px;display:flex;flex-direction:column;gap:9px;padding:16px 0 0 13px}
.curves button{flex-direction:column;width:75px;height:76px;justify-content:space-between;padding:8px 0 0;background:var(--btn);border:1px solid #888;border-radius:6px;box-shadow:2px 2px 3px #777}
.curves .on{background:#7fb2e5;border-color:#7fb2e5;color:#fff;font-size:12px}
.fields{flex:1;min-width:0;padding:22px 43px 0 0}
h3{font-weight:700}
.eq{margin-top:12px;border-color:#3d98e8}
.eq input{padding:0 4px}
.line{display:flex;align-items:center;margin-top:25px}
.dollar{width:40px;padding-left:5px;color:#2a9a4a;font-size:16px}
.line label{padding-right:8px}
.line select+label,.spin+label{padding-left:20px}
.line select{padding-left:8px}
.spin{display:flex;width:76px;height:30px;border:2px solid var(--line)}
.spin input{width:46px}
.spin>span{flex:1;display:flex;flex-direction:column;border-left:2px solid var(--line);background:var(--btn)}
.spin button{flex:1}
.spin button+button{border-top:2px solid var(--line)}
.spin .caret{width:6px;height:5px;background:#000}
.dates{display:grid;grid-template-columns:82px 1fr 114px 1fr;margin-top:24px}
.dates .field+label{padding-left:25px}
.stack{display:grid;grid-template-columns:80px 239px;row-gap:12px;margin-top:13px}
.id{font-size:17px}
.blk{height:31px;padding-left:5px}
.status{margin-top:14px}
.status span{color:#2f9e3f;padding-left:4px}
hr{border:0;height:2px;background:var(--line);margin:11px 0}
.calc,.risk{display:flex;align-items:center}
.calc label{width:70px}
.calc select{width:113px;height:29px;padding-left:6px;background:url("data:image/svg+xml,%3Csvg xmlns='http://www.w3.org/2000/svg' width='10' height='9'%3E%3Cpath d='M0 0h10l-5 9z' fill='%23666'/%3E%3C/svg%3E") right 9px center no-repeat #e4e4e4}
.fields a{font-size:13px;font-weight:700;color:#0f72b5;text-decoration:underline}
.calc a{margin:0 6px 0 36px}
.risk{margin-top:16px}
.risk a{margin-right:10px}

/* references */
.refs{flex:none;height:312px;margin:9px 0 0 2px;background:#fff;border:2px solid var(--blue);border-top:0}
.refs .phead{margin:0 -2px}
.rtools{display:flex;align-items:center;gap:3px;height:36px;padding:0 0 0 4px}
.rtools button{width:33px;height:28px;background:#f0f0f0}
.rtools .act{background:#e2e2e2}
.rtools .money{flex-direction:column;font-weight:700;font-size:13px;line-height:13px}
.rtools .idb{width:57px;gap:0}
.idb .fx{color:#aaa;font-weight:400}
.idb svg{margin:8px 8px 0 -2px}.idb .caret{background:#999}
.chk{display:flex;align-items:center;gap:7px;margin-left:auto}
.chk input{appearance:none;width:16px;height:16px;border:1px solid #666;background:#fff}
.tsep{width:2px;height:26px;background:var(--line);margin:0 1px 0 5px}
table{table-layout:fixed;border-collapse:collapse;border-top:2px solid #bbb;margin-left:2px;width:calc(100% - 2px)}
.k62{width:62px}.k512{width:512px}.k75{width:75px}.k90{width:90px}.k100{width:100px}.k313{width:313px}.k131{width:131px}.k188{width:188px}
th{height:47px;padding:0 14px;font-weight:400;line-height:20px;background:#e9e9e9}
th:first-child,th:nth-child(3){padding:0 4px}
th:nth-child(n+5){padding:0 10px}
th,td{border:1px solid #8a8a8a;border-top:0}
tr>:first-child{border-left:0}tr>:last-child{border-right:0}
td{height:25px;padding:0 4px;line-height:20px;white-space:nowrap;text-align:right;border-bottom:2px solid #a0a0a0}
td:first-child{text-align:center;background:#e9e9e9;color:#777}
td:nth-child(2){text-align:left;border-left:3px solid #7fb8f0}
td:nth-child(7),td:nth-child(10),td:nth-child(11){background:#e9e9e9;color:#777}
td:nth-child(10){text-align:left}

/* status bar */
.statusbar{flex:none;display:flex;align-items:center;height:32px;padding:0 17px 0 4px;background:#d9d9d9;border-bottom:1px solid #999}
.ready{flex:1}
.ssep{width:1px;height:28px;background:#888}
.views{display:flex;gap:15px;padding:0 12px 0 16px}
.fit{margin:0 10px 0 13px}
.zb{font-size:24px;width:16px;color:#444}
.ssep+.zb{margin-left:18px}
input[type=range]{appearance:none;width:150px;height:24px;margin:0 8px;background:linear-gradient(#888,#888) center/100% 2px no-repeat}
input[type=range]::-webkit-slider-thumb{appearance:none;width:5px;height:20px;background:#000}
.zoom{margin-left:16px}
```
